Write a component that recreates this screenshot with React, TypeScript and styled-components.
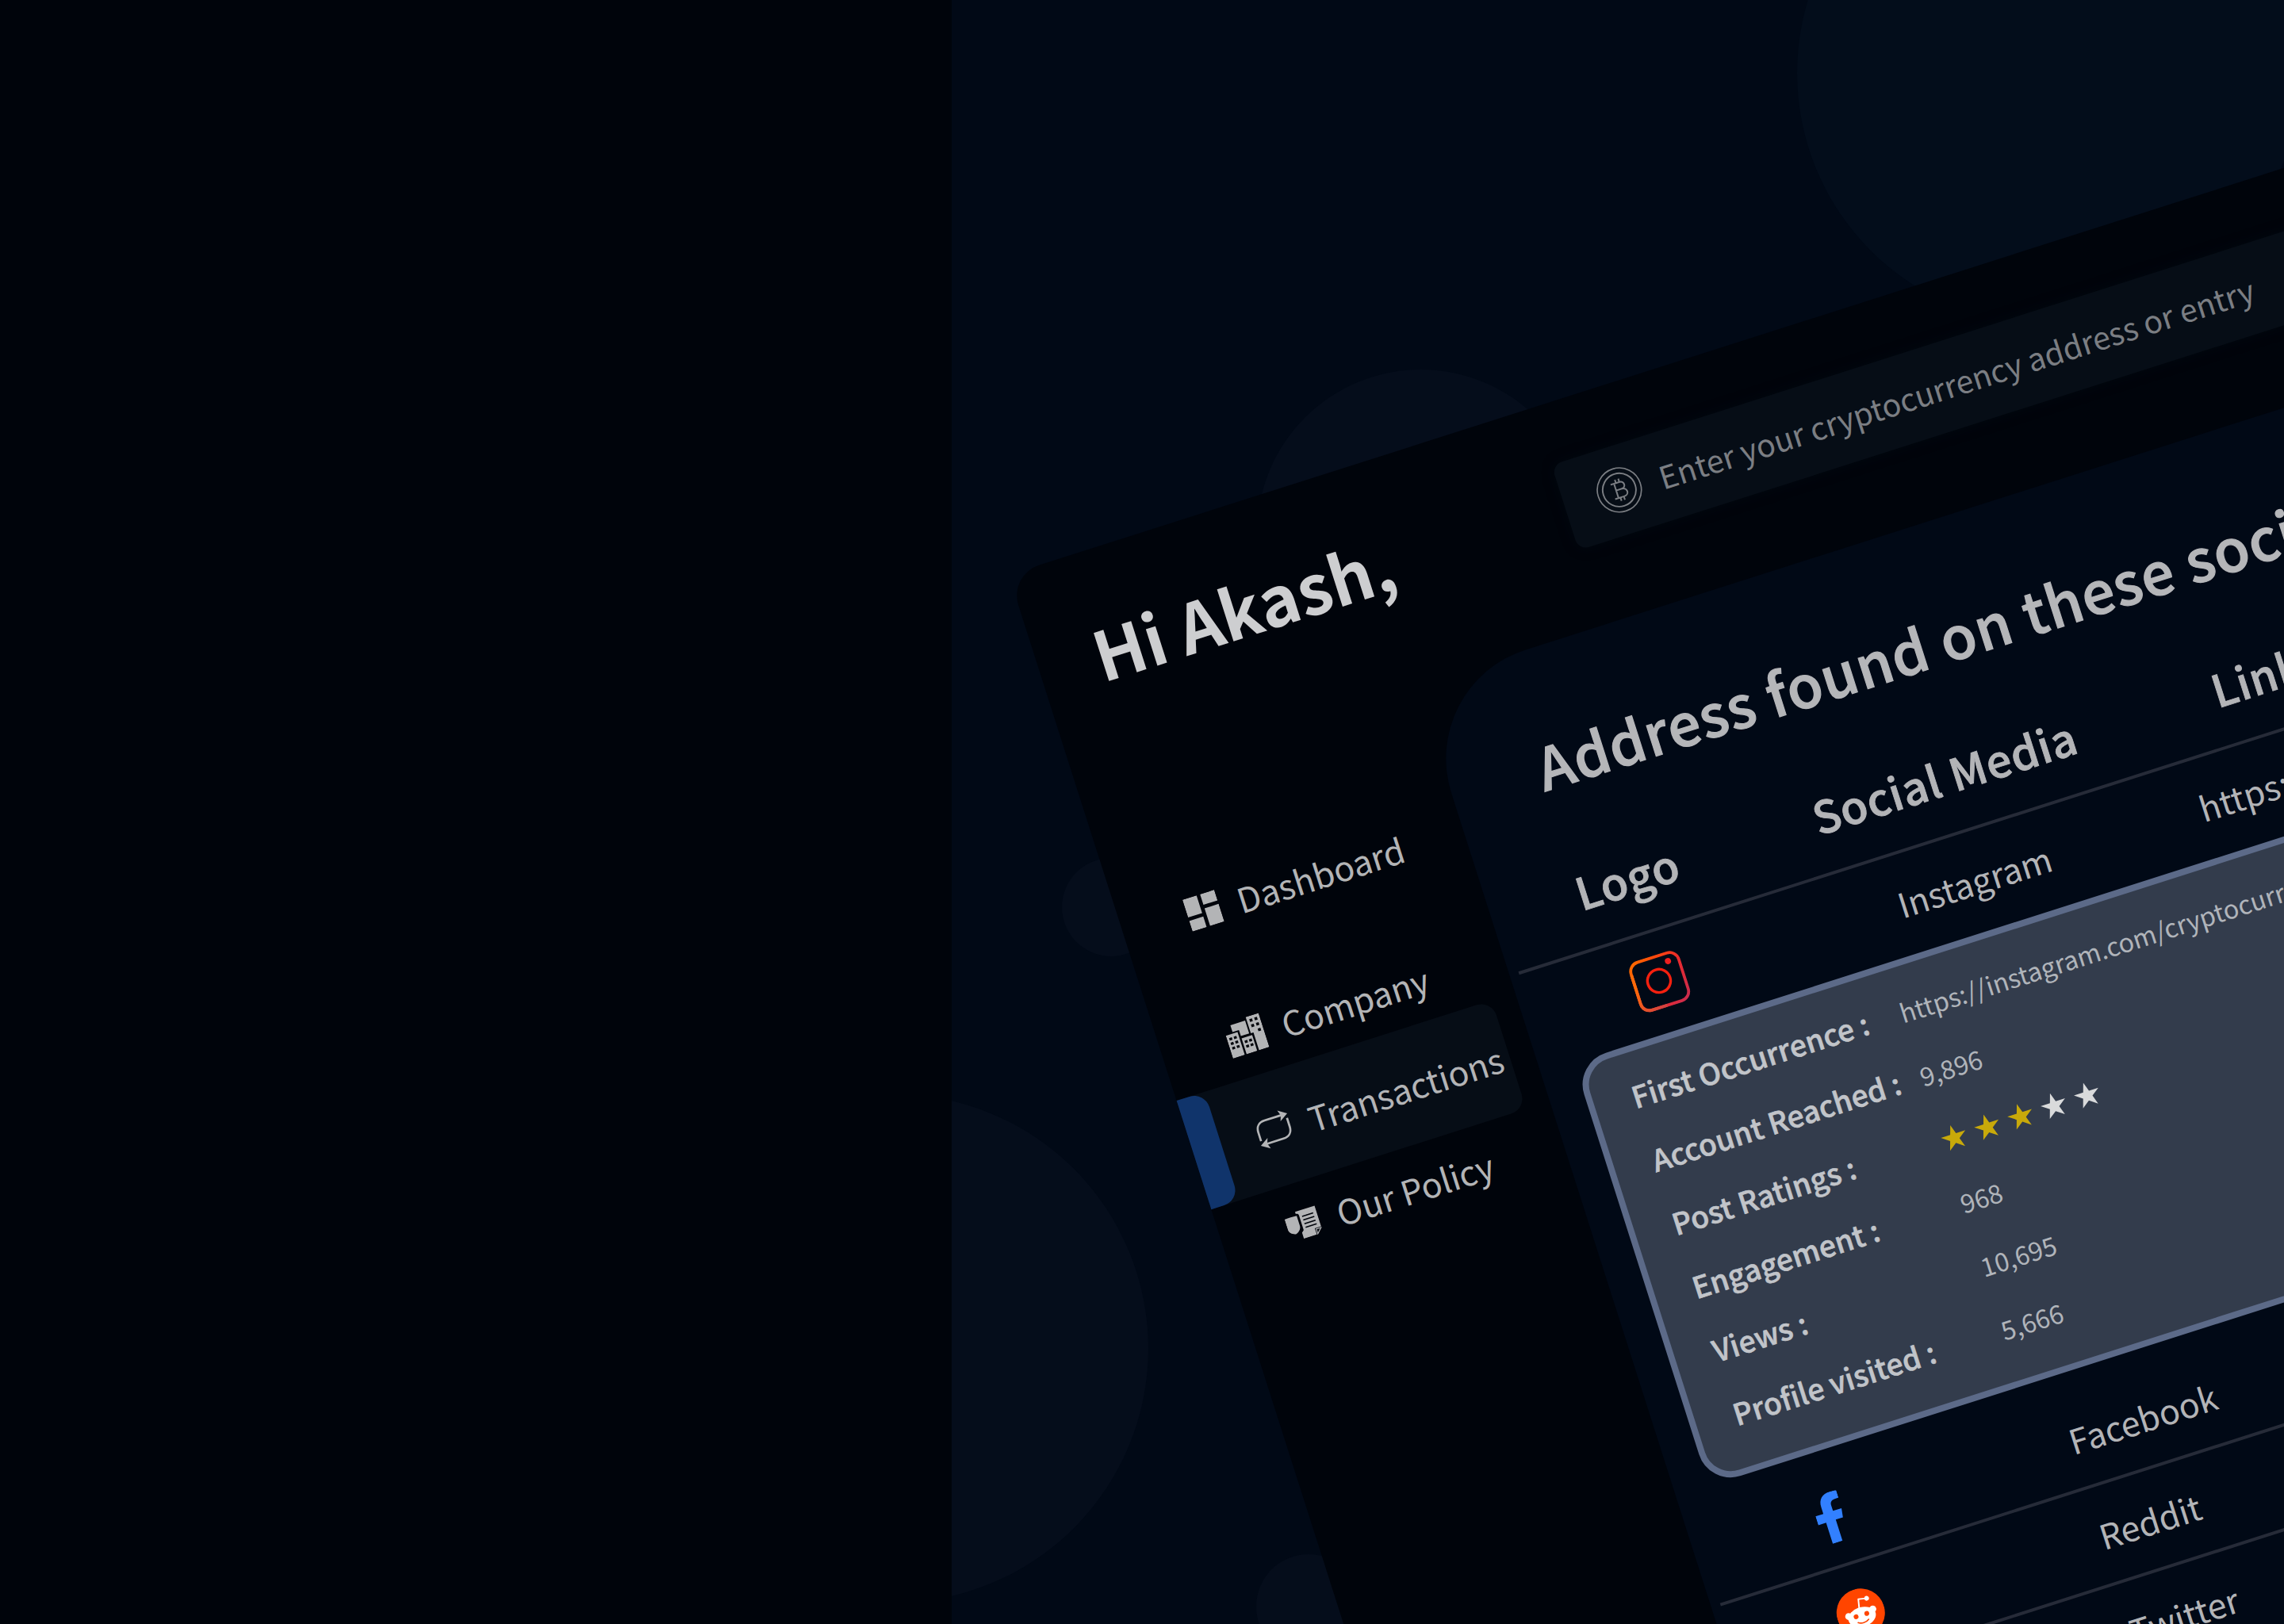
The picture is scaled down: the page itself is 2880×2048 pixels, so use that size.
import React from "react";
import styled, { createGlobalStyle } from "styled-components";

const GlobalStyle = createGlobalStyle`
  *, *::before, *::after { box-sizing: border-box; }
  html, body { margin: 0; padding: 0; background: #00040b; }
  body { overflow: hidden; }
`;

const Page = styled.div`
  display: flex;
  width: 2880px;
  height: 2048px;
  overflow: hidden;
  background: #00040b;
  color: #b3b4b7;
  font-family: "Noto Sans CJK SC", "Noto Sans", sans-serif;
  white-space: nowrap;
`;

const Hero = styled.section`
  flex: 0 0 1200px;
  background: #00040b;
`;

const Scene = styled.section`
  position: relative;
  flex: 1;
  overflow: hidden;
  background: #010916;
`;

const Bubble = styled.div<{ $x: number; $y: number; $r: number; $tone?: string }>`
  position: absolute;
  left: ${(p) => p.$x - p.$r}px;
  top: ${(p) => p.$y - p.$r}px;
  width: ${(p) => p.$r * 2}px;
  height: ${(p) => p.$r * 2}px;
  border-radius: 50%;
  background: ${(p) => p.$tone ?? "#050d1b"};
`;

const Window = styled.div`
  position: absolute;
  left: 71.6px;
  top: 724.9px;
  display: flex;
  width: 2500px;
  height: 2000px;
  border-radius: 40px;
  background: #00040b;
  transform: rotate(-17.7deg);
  transform-origin: 0 0;
`;

const Sidebar = styled.aside`
  flex: 0 0 448px;
  min-width: 0;
  padding-top: 79px;
`;

const Greeting = styled.h1`
  margin: 0 0 0 72px;
  font-size: 86px;
  line-height: 100px;
  font-weight: 700;
  color: #cdced0;
`;

const Nav = styled.nav`
  display: flex;
  flex-direction: column;
  margin-top: 247px;
`;

const NavItem = styled.a<{ $active?: boolean; $after?: number }>`
  display: flex;
  align-items: center;
  gap: 24px;
  width: 417px;
  height: ${(p) => (p.$active ? 144 : 104)}px;
  margin-bottom: ${(p) => p.$after ?? 0}px;
  padding-left: ${(p) => (p.$active ? 0 : 84)}px;
  border-radius: 0 20px 20px 0;
  background: ${(p) => (p.$active ? "#060d16" : "transparent")};
  font-size: 43px;
  line-height: 64px;
  color: #b3b4b6;

  &::before {
    content: "";
    display: ${(p) => (p.$active ? "block" : "none")};
    flex: none;
    width: 37px;
    height: 100%;
    margin-right: 23px;
    border-radius: 0 20px 20px 0;
    background: #10346b;
  }

  svg {
    flex: none;
    display: block;
    fill: currentColor;
  }
`;

const Main = styled.main`
  flex: 1;
  display: flex;
  flex-direction: column;
`;

const Header = styled.header`
  flex: 0 0 288px;
  padding: 76px 0 0 246px;
`;

const SearchBox = styled.div`
  display: flex;
  align-items: center;
  gap: 24px;
  width: 1400px;
  height: 113px;
  padding: 0 0 2px 43px;
  border-radius: 14px;
  background: #060d16;
  color: #7b7e83;
  font-size: 39.3px;
  line-height: 56px;
  box-shadow: 0 0 16px rgba(6, 13, 22, 0.4);

  svg {
    display: block;
    flex: none;
  }
`;

const Panel = styled.section`
  flex: 1;
  padding-top: 106px;
  border-radius: 144px 0 0 0;
  background: #010916;
`;

const PanelTitle = styled.h2`
  margin: 0 0 53.5px 113px;
  font-size: 73px;
  line-height: 80px;
  font-weight: 500;
  letter-spacing: 1.1px;
  -webkit-text-stroke: 1.2px currentColor;
  color: #b5b6b9;
`;

const Row = styled.div<{ $line?: boolean; $head?: boolean }>`
  display: grid;
  grid-template-columns: 333px 507px 900px;
  align-items: center;
  height: ${(p) => (p.$head ? 148 : 126)}px;
  margin-left: 12px;
  border-bottom: 4px solid ${(p) => (p.$line ? "#262b38" : "transparent")};
  font-size: ${(p) => (p.$head ? 56 : 43)}px;
  font-weight: ${(p) => (p.$head ? 500 : 400)};
  letter-spacing: ${(p) => (p.$head ? 0.8 : 0)}px;
  -webkit-text-stroke: ${(p) => (p.$head ? "0.9px currentColor" : "0")};
  line-height: 64px;
`;

const LogoCell = styled.div`
  display: flex;
  justify-content: center;

  svg {
    display: block;
    margin: 2px 2px 0 0;
  }
`;

const HeadCell = styled.div`
  text-align: center;
`;

const LinkHead = styled.div`
  padding-left: 101px;
`;

const NameCell = styled.div`
  padding-left: 149px;
`;

const LinkCell = styled.div`
  padding-left: 41px;
`;

const Details = styled.dl`
  display: grid;
  grid-template-columns: 354px 1fr;
  grid-auto-rows: 84px;
  align-items: center;
  width: 1620px;
  height: 560px;
  margin: 1.5px 0 22.5px 44px;
  padding: 12px 0 0 48.5px;
  border: 8px solid #5c6a88;
  border-radius: 42px;
  background: #333c4c;
`;

const Label = styled.dt`
  padding-top: 2px;
  font-size: 37.4px;
  line-height: 56px;
  font-weight: 500;
  letter-spacing: 0.1px;
  -webkit-text-stroke: 0.6px currentColor;
  color: #c1c4c9;
`;

const Value = styled.dd`
  margin: 0;
  padding-top: 5px;
  font-size: 32.3px;
  line-height: 52px;
  color: #b0b4ba;
`;

const Stars = styled.dd`
  display: flex;
  gap: 10px;
  margin: 11px 0 0 0;
`;

const Star = styled.svg<{ $on: boolean }>`
  display: block;
  width: 34px;
  height: 34px;
  fill: ${(p) => (p.$on ? "#c8a90a" : "#d9dadb")};
`;

const DashboardIcon = () => (
  <svg width="42" height="42" viewBox="3 3 18 18">
    <path d="M3 13h8V3H3v10zm0 8h8v-6H3v6zm10 0h8V11h-8v10zm0-18v6h8V3h-8z" />
  </svg>
);

const CompanyIcon = () => (
  <svg width="48" height="45" viewBox="0 0 48 45">
    <path
      fillRule="evenodd"
      d="M9.5 4H29v17H18v-8H9.5z
      M0 15h15.5v30H0z M3 19h3.6v3.2H3z M9 19h3.6v3.2H9z M3 25h3.6v3.2H3z M9 25h3.6v3.2H9z M3 31h3.6v3.2H3z M9 31h3.6v3.2H9z
      M18 24h14v21H18z M20.5 28h3.6v3.2h-3.6z M26.3 28h3.6v3.2h-3.6z M20.5 34h3.6v3.2h-3.6z M26.3 34h3.6v3.2h-3.6z
      M31 0h17v45H34.5V21.5H31z M34.5 4h3.6v3.6h-3.6z M41 4h3.6v3.6H41z M34.5 11h3.6v3.6h-3.6z M41 11h3.6v3.6H41z M41 18.5h3.6v3.6H41z"
    />
  </svg>
);

const TransactionsIcon = () => (
  <svg width="44" height="44" viewBox="0 0 44 44">
    <path
      d="M2 31V19.5C2 12 6.5 7.5 14 7.5H36 M42 13V24.5C42 32 37.5 36.5 30 36.5H8"
      fill="none"
      stroke="currentColor"
      strokeWidth="2.7"
    />
    <path d="M33 0.5 44 7.5 33 14.5 35.5 7.5z M11 29.5 0 36.5 11 43.5 8.5 36.5z" />
  </svg>
);

const PolicyIcon = () => (
  <svg width="42" height="37" viewBox="0 0 43 38">
    <path d="M0 6.5C6 6 11 6 16.5 6.5V20C16.5 25 12 28 8.3 29 4 28 0 25 0 20z" />
    <path
      fillRule="evenodd"
      d="M16 1H42.5V29H34V37.5H16.5V29.5L19.5 27V7C19.5 5 18 4 16 4z
      M23 8.5h15v1.6H23z M23 13.5h15v1.6H23z M23 18.5h15v1.6H23z M23 23.5h15v1.6H23z"
    />
    <path d="M35.5 30.5H42L35.5 37z" fill="none" stroke="currentColor" strokeWidth="1.2" />
  </svg>
);

const CoinIcon = () => (
  <svg width="58" height="58" viewBox="-29 -29 58 58" fill="none" stroke="currentColor">
    <circle r="27.8" strokeWidth="1.7" />
    <circle r="21" strokeWidth="1.9" />
    <path
      d="M-8.5 -9.5H3.5C9.5 -9.5 9.5 -0.5 3.5 -0.5H-4 M3.5 -0.5C11 -0.5 11 9.5 3.5 9.5H-8.5 M-4 -9.5V9.5 M-1.5 -14V-9.5 M3 -14V-9.5 M-1.5 9.5V14 M3 9.5V14"
      strokeWidth="2"
    />
  </svg>
);

const InstagramIcon = () => (
  <svg width="68" height="68" viewBox="-34 -34 68 68" fill="none">
    <defs>
      <linearGradient id="ig" x1="-32" y1="-26" x2="32" y2="30" gradientUnits="userSpaceOnUse">
        <stop offset="0" stopColor="#ff6a00" />
        <stop offset="0.25" stopColor="#ff4a0a" />
        <stop offset="0.6" stopColor="#ea2a2c" />
        <stop offset="1" stopColor="#c92c50" />
      </linearGradient>
      <linearGradient id="igSide" x1="-30" y1="0" x2="-4" y2="30" gradientUnits="userSpaceOnUse">
        <stop offset="0" stopColor="#ff6a0a" />
        <stop offset="1" stopColor="#d4423f" />
      </linearGradient>
    </defs>
    <rect x="-31.5" y="-31.5" width="63" height="63" rx="12" stroke="url(#ig)" strokeWidth="3.8" />
    <path d="M-31.5 -18V19.5C-31.5 27 -27 31.5 -19.5 31.5H0" stroke="url(#igSide)" strokeWidth="3.8" />
    <circle cx="-0.5" cy="-1" r="14.6" stroke="#f5200f" strokeWidth="3.4" />
    <circle cx="17.8" cy="-21.3" r="3.9" fill="#f01f1f" />
  </svg>
);

const FacebookIcon = () => (
  <svg width="35.5" height="64" viewBox="22 0 279 512" preserveAspectRatio="none" fill="#3280ff">
    <path d="M279.14 288l14.22-92.66h-88.91v-60.13c0-25.35 12.42-50.06 52.24-50.06h40.42V6.26S260.43 0 225.36 0c-73.22 0-121.08 44.38-121.08 124.72v70.62H22.89V288h81.39v224h100.17V288z" />
  </svg>
);

const RedditIcon = () => (
  <svg width="61" height="61" viewBox="0 0 20 20">
    <circle cx="10" cy="10" r="10" fill="#ff4500" />
    <path
      fill="#fff"
      d="M16.67 10a1.46 1.46 0 0 0-2.47-1 7.12 7.12 0 0 0-3.85-1.23l.65-3.08 2.13.45a1 1 0 1 0 .13-.61L10.82 4a.31.31 0 0 0-.37.24l-.74 3.47a7.14 7.14 0 0 0-3.9 1.23 1.46 1.46 0 1 0-1.61 2.39 2.87 2.87 0 0 0 0 .44c0 2.24 2.61 4.06 5.83 4.06s5.83-1.82 5.83-4.06a2.87 2.87 0 0 0 0-.44 1.46 1.46 0 0 0 .81-1.33zm-10 1a1 1 0 1 1 2 0 1 1 0 0 1-2 0zm5.81 2.75a3.84 3.84 0 0 1-2.47.77 3.84 3.84 0 0 1-2.47-.77.27.27 0 0 1 .38-.38 3.27 3.27 0 0 0 2.09.61 3.28 3.28 0 0 0 2.09-.61.27.27 0 1 1 .39.4zm-.18-1.71a1 1 0 1 1 1-1 1 1 0 0 1-1 1z"
    />
  </svg>
);

const TwitterIcon = () => (
  <svg width="60" height="60" viewBox="0 0 24 24" fill="#1d9bf0">
    <path d="M23.95 4.57a10 10 0 0 1-2.82.77 4.96 4.96 0 0 0 2.16-2.72c-.95.55-2 .95-3.13 1.18a4.92 4.92 0 0 0-8.38 4.48C7.69 8.1 4.07 6.13 1.64 3.16a4.92 4.92 0 0 0 1.52 6.57 4.9 4.9 0 0 1-2.23-.61v.06a4.92 4.92 0 0 0 3.95 4.83 5 5 0 0 1-2.21.08 4.94 4.94 0 0 0 4.6 3.42A9.87 9.87 0 0 1 0 19.54a13.99 13.99 0 0 0 7.55 2.21c9.05 0 14-7.5 14-13.98 0-.21 0-.42-.02-.63a9.94 9.94 0 0 0 2.46-2.55z" />
  </svg>
);

const navItems = [
  { label: "Dashboard", icon: <DashboardIcon />, after: 62 },
  { label: "Company", icon: <CompanyIcon /> },
  { label: "Transactions", icon: <TransactionsIcon />, active: true },
  { label: "Our Policy", icon: <PolicyIcon /> },
];

const otherNetworks = [
  { name: "Facebook", icon: <FacebookIcon /> },
  { name: "Reddit", icon: <RedditIcon /> },
  { name: "Twitter", icon: <TwitterIcon /> },
];

const rating = 3;

export default function App() {
  return (
    <>
      <GlobalStyle />
      <Page>
        <Hero />
        <Scene>
          <Bubble $x={1383} $y={92} $r={317} $tone="#030d1b" />
          <Bubble $x={591} $y={672.5} $r={206.5} />
          <Bubble $x={201} $y={1144} $r={62} />
          <Bubble $x={-73} $y={1700} $r={320.5} />
          <Bubble $x={450} $y={2026} $r={66} />
          <Window>
            <Sidebar>
              <Greeting>Hi Akash,</Greeting>
              <Nav>
                {navItems.map((item) => (
                  <NavItem key={item.label} $active={item.active} $after={item.after}>
                    {item.icon}
                    <span>{item.label}</span>
                  </NavItem>
                ))}
              </Nav>
            </Sidebar>
            <Main>
              <Header>
                <SearchBox>
                  <CoinIcon />
                  <span>Enter your cryptocurrency address or entry</span>
                </SearchBox>
              </Header>
              <Panel>
                <PanelTitle>Address found on these social</PanelTitle>
                <Row $head $line>
                  <HeadCell>Logo</HeadCell>
                  <HeadCell>Social Media</HeadCell>
                  <LinkHead>Link</LinkHead>
                </Row>
                <Row>
                  <LogoCell>
                    <InstagramIcon />
                  </LogoCell>
                  <NameCell>Instagram</NameCell>
                  <LinkCell>https://</LinkCell>
                </Row>
                <Details>
                  <Label>First Occurrence :</Label>
                  <Value>https://instagram.com/cryptocurrency</Value>
                  <Label>Account Reached :</Label>
                  <Value>9,896</Value>
                  <Label>Post Ratings :</Label>
                  <Stars>
                    {[0, 1, 2, 3, 4].map((n) => (
                      <Star key={n} $on={n < rating} viewBox="-17 -17 34 34">
                        <path d="M0 -17 3.82 -5.25 16.17 -5.25 6.18 2 9.99 13.75 0 6.5 -9.99 13.75 -6.18 2 -16.17 -5.25 -3.82 -5.25z" />
                      </Star>
                    ))}
                  </Stars>
                  <Label>Engagement :</Label>
                  <Value>968</Value>
                  <Label>Views :</Label>
                  <Value>10,695</Value>
                  <Label>Profile visited :</Label>
                  <Value>5,666</Value>
                </Details>
                {otherNetworks.map((n) => (
                  <Row key={n.name} $line>
                    <LogoCell>{n.icon}</LogoCell>
                    <NameCell>{n.name}</NameCell>
                  </Row>
                ))}
              </Panel>
            </Main>
          </Window>
        </Scene>
      </Page>
    </>
  );
}
